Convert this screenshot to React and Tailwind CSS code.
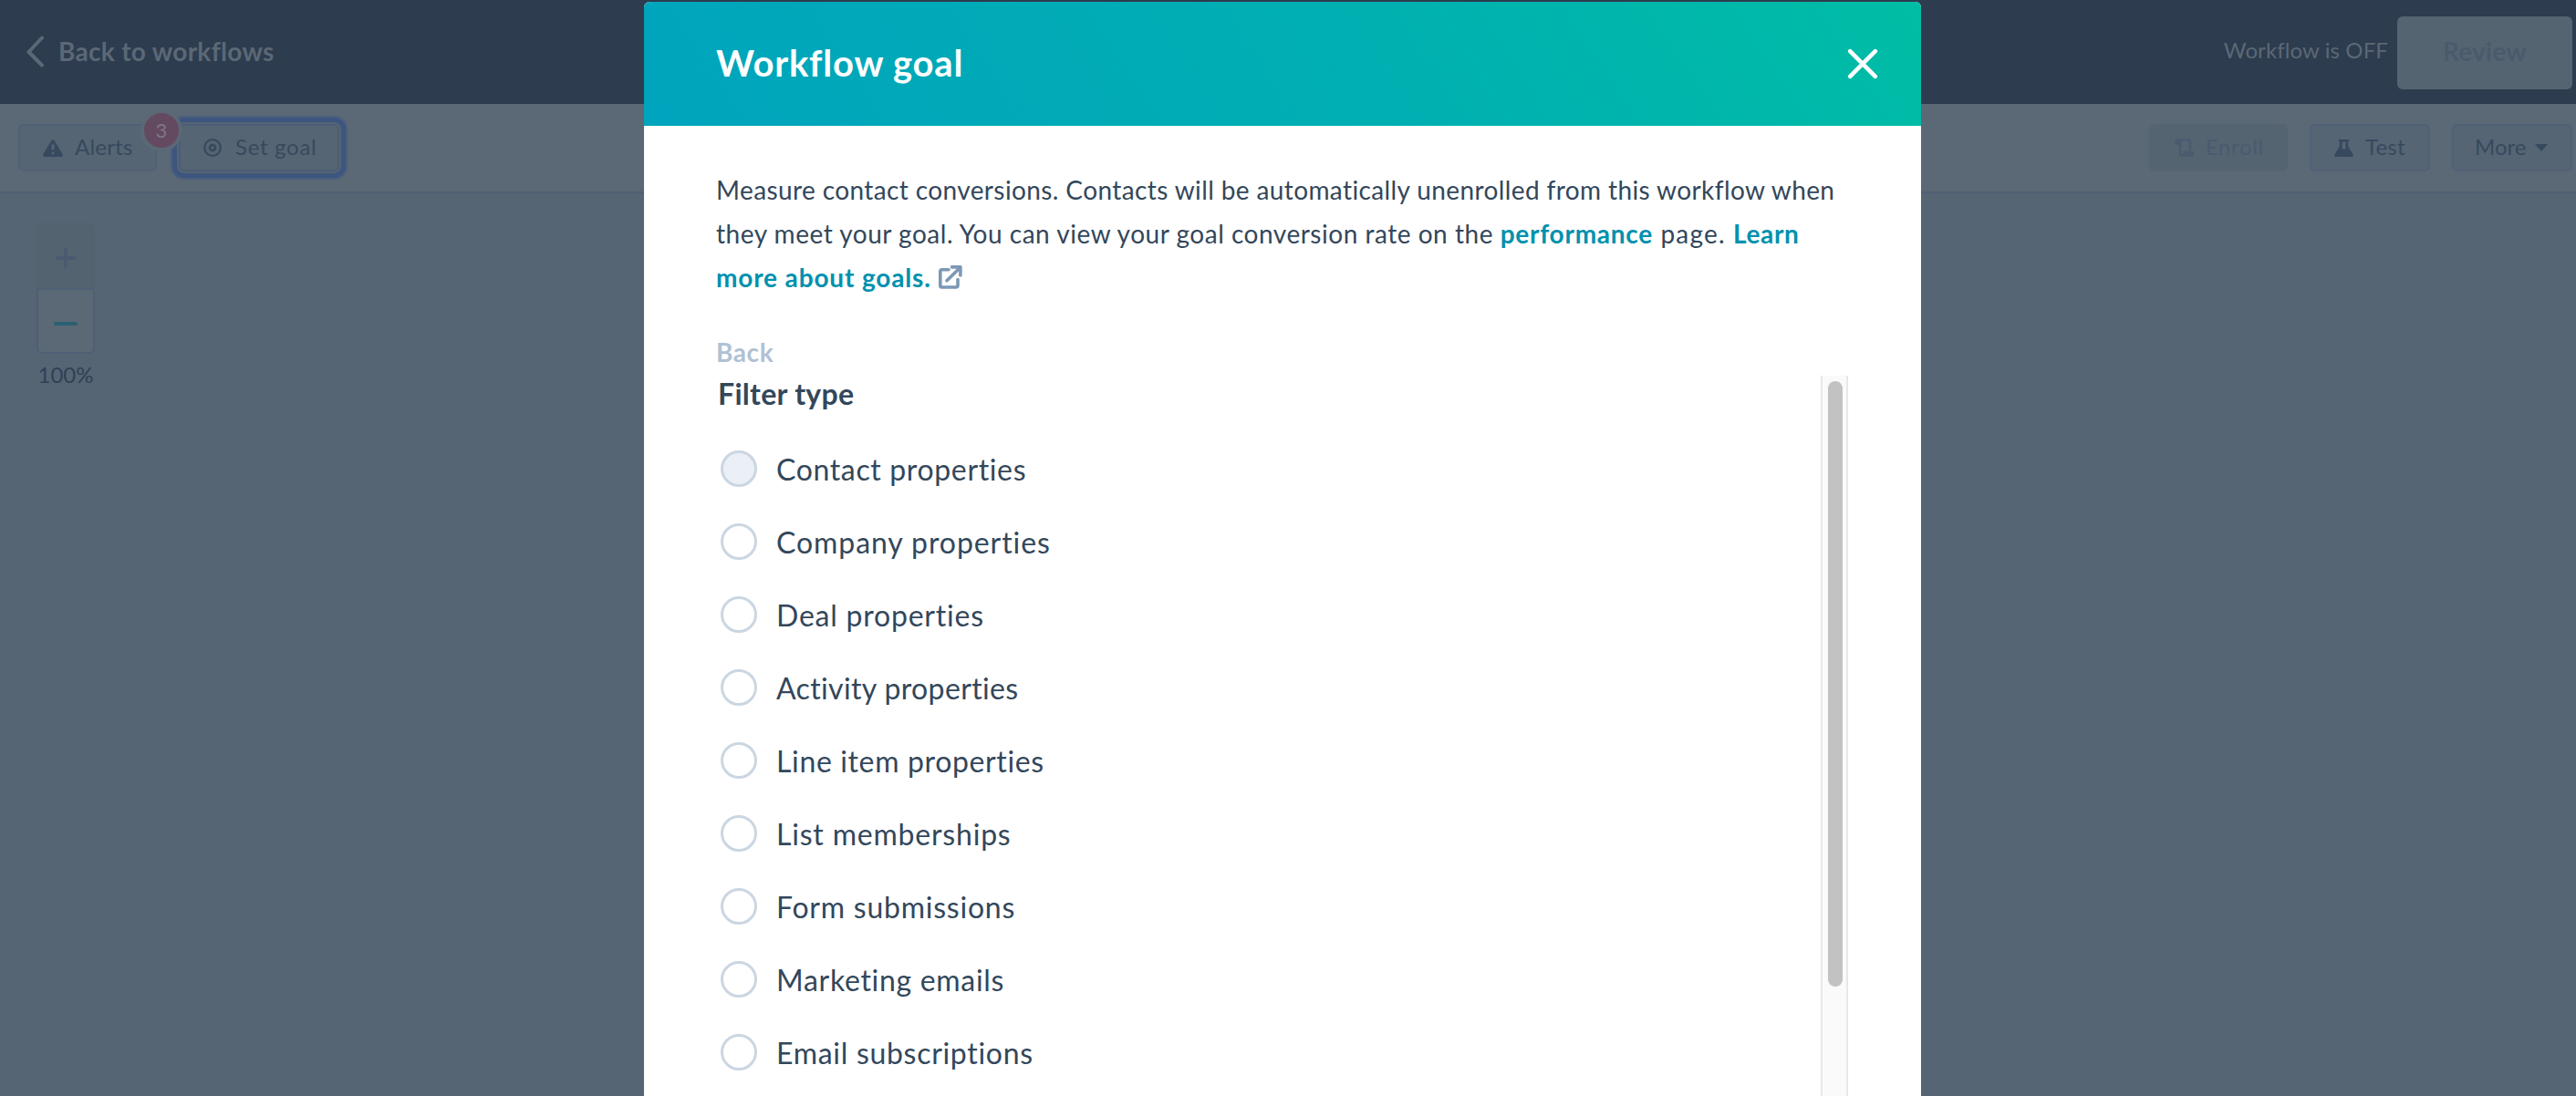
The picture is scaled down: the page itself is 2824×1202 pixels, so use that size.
import React, { useState } from "react";

const filterTypes = [
  { label: "Contact properties", tracking: "tracking-[0.64px]" },
  { label: "Company properties", tracking: "tracking-[0.92px]" },
  { label: "Deal properties", tracking: "tracking-[0.78px]" },
  { label: "Activity properties", tracking: "tracking-[0.36px]" },
  { label: "Line item properties", tracking: "tracking-[0.64px]" },
  { label: "List memberships", tracking: "tracking-[0.8px]" },
  { label: "Form submissions", tracking: "tracking-[0.76px]" },
  { label: "Marketing emails", tracking: "tracking-[0.7px]" },
  { label: "Email subscriptions", tracking: "tracking-[0.7px]" },
];

const ChevronLeftIcon = () => (
  <svg width="20" height="36" viewBox="0 0 20 36" fill="none" stroke="#5b6876" strokeWidth="4" strokeLinecap="round" strokeLinejoin="round">
    <path d="M17 2.5 2.5 18 17 32.5" />
  </svg>
);

const WarningIcon = () => (
  <svg width="22" height="19" viewBox="0 0 22 19">
    <path
      fill="#36495f"
      d="M9.3 1.2a2 2 0 0 1 3.4 0l8.9 14.9a1.9 1.9 0 0 1-1.7 2.9H2.1a1.9 1.9 0 0 1-1.7-2.9z"
    />
    <path d="M11 5.5v6M11 13.8v2.4" stroke="#566573" strokeWidth="2.8" />
  </svg>
);

const TargetIcon = () => (
  <svg width="20" height="20" viewBox="0 0 20 20" fill="none" stroke="#36495f">
    <circle cx="10" cy="10" r="8.8" strokeWidth="2.2" />
    <circle cx="10" cy="10" r="3.1" strokeWidth="2.6" />
  </svg>
);

const ScrollIcon = () => (
  <svg width="21" height="20" viewBox="0 0 21 20" fill="none" stroke="#4a5b70" strokeWidth="2.6">
    <path d="M1.3 5.7V3.6a2.2 2.2 0 0 1 2.2-2.3h11.3a2.2 2.2 0 0 1 2.2 2.2v10" strokeLinejoin="round" />
    <path d="M6 2v14.2a2.2 2.2 0 0 0 2.2 2.2h2" />
    <path d="M1 3h5v4H2a1 1 0 0 1-1-1zM9.5 13.8H21v2.6a3.4 3.4 0 0 1-3.4 3.4H9.5z" fill="#4a5b70" stroke="none" />
  </svg>
);

const FlaskIcon = () => (
  <svg width="21" height="19" viewBox="0 0 21 19">
    <path
      fill="#36495f"
      fillRule="evenodd"
      d="M5.6 0h9.8a.9.9 0 0 1 .9.9v1.4h-1.2v5.2l5.5 9a1.6 1.6 0 0 1-1.4 2.5H1.8a1.6 1.6 0 0 1-1.4-2.5l5.5-9V2.3H4.7V.9a.9.9 0 0 1 .9-.9zM8.6 2.5v8h3.8v-8z"
    />
  </svg>
);

const ExternalLinkIcon = () => (
  <svg width="26" height="26" viewBox="0 0 26 26" fill="none" stroke="#7c98b6" strokeWidth="3.6">
    <path d="M11 4.8H3.6a1.8 1.8 0 0 0-1.8 1.8v15.6A1.8 1.8 0 0 0 3.6 24h15.6a1.8 1.8 0 0 0 1.8-1.8V15.5" strokeLinecap="round" />
    <path d="M9 16.8 22 4" strokeLinecap="round" />
    <path d="M14.5 1.9h9.4v9" strokeLinecap="round" strokeLinejoin="round" />
  </svg>
);

const CloseIcon = () => (
  <svg width="34" height="34" viewBox="0 0 34 34" stroke="#ffffff" strokeWidth="4.6" strokeLinecap="round">
    <path d="M3.2 3.2l27.6 27.6M30.8 3.2 3.2 30.8" />
  </svg>
);

const TopBar = () => (
  <header className="flex h-[114px] items-center justify-between bg-[#2d3c4e] pr-1 pl-[29px]">
    <button className="flex items-center gap-[15px]">
      <ChevronLeftIcon />
      <span className="pb-[3px] text-[28px] font-bold tracking-[0.3px] text-[#5b6876]">
        Back to workflows
      </span>
    </button>
    <div className="flex items-center gap-[10px]">
      <span className="pb-[4px] text-[24px] tracking-[0.1px] text-[#5b6876]">Workflow is OFF</span>
      <button className="mt-[2px] h-20 w-48 rounded-md bg-[#556471] pb-[5px] text-[28px] font-bold tracking-[0.2px] text-[#4a5a6d]">
        Review
      </button>
    </div>
  </header>
);

const Toolbar = () => (
  <div className="flex h-[98px] items-center justify-between border-b-2 border-[#4f5f75] bg-[#5b6875] pr-1 pl-5 text-[24px] text-[#36495f]">
    <div className="flex items-center gap-6">
      <button className="relative flex h-[52px] w-[152px] items-center rounded-md border-2 border-[#506177] bg-[#566573] pl-[25px]">
        <WarningIcon />
        <span className="pb-[3px] pl-[13px] tracking-[0.2px]">Alerts</span>
        <span className="absolute -top-[18px] -right-[30px] z-10 flex size-[46px] items-center justify-center rounded-full border-4 border-[#5b6875] bg-[#644a60] pb-[2px] text-[22px] text-[#7e7789]">
          3
        </span>
      </button>
      <button className="flex h-[52px] w-[176px] items-center rounded-md border-2 border-[#4b5e77] bg-[#566573] pl-[25px] shadow-[0_0_0_2px_#566573,0_0_0_7px_#3d567f,0_0_0_9px_#4a5f7d]">
        <TargetIcon />
        <span className="pb-[3px] pl-[15px] tracking-[0.7px]">Set goal</span>
      </button>
    </div>
    <div className="flex items-center gap-6">
      <button className="flex h-[52px] w-[152px] items-center rounded-md bg-[#556471] pl-[28px] text-[#4a5b70]">
        <ScrollIcon />
        <span className="pb-[3px] pl-[13px] tracking-[0.6px]">Enroll</span>
      </button>
      <button className="flex h-[52px] w-[132px] items-center rounded-md border-2 border-[#506177] bg-[#566573] pl-[25px]">
        <FlaskIcon />
        <span className="pb-[3px] pl-[13px] tracking-[0.2px]">Test</span>
      </button>
      <button className="flex h-[52px] w-[132px] items-center rounded-md border-2 border-[#506177] bg-[#566573] pl-[23px]">
        <span className="pb-[3px]">More</span>
        <svg className="ml-[10px]" width="14" height="8" viewBox="0 0 14 8">
          <path d="M0 0h14L7 8z" fill="#36495f" />
        </svg>
      </button>
    </div>
  </div>
);

const ZoomControls = () => (
  <div className="flex w-[80px] flex-col items-center pt-8">
    <div className="flex h-[72px] w-16 items-center justify-center rounded-t-md bg-[#546370] pt-[6px]">
      <svg width="24" height="24" viewBox="0 0 24 24" stroke="#4a5b70" strokeWidth="4" strokeLinecap="round">
        <path d="M12 2.5v19M2.5 12h19" />
      </svg>
    </div>
    <div className="flex h-[72px] w-16 items-center justify-center rounded-b-md border-2 border-[#4f5f75] bg-[#5b6875] pt-[6px]">
      <svg width="26" height="4" viewBox="0 0 26 4" stroke="#2a6072" strokeWidth="4" strokeLinecap="round">
        <path d="M2 2h22" />
      </svg>
    </div>
    <span className="pt-[5px] text-[24px] text-[#2f4055]">100%</span>
  </div>
);

const FilterOption = ({ label, tracking, highlighted, onSelect }) => (
  <button onClick={onSelect} className="flex h-20 items-center gap-[21px] pl-1">
    <span
      className={`size-10 rounded-full border-3 border-[#cbd6e2] ${
        highlighted ? "bg-[#eaf0f6]" : "bg-white"
      }`}
    />
    <span className={`pt-[2px] text-[32px] ${tracking}`}>{label}</span>
  </button>
);

const GoalModal = () => {
  const [selected, setSelected] = useState(0);

  return (
    <div className="absolute top-[2px] left-[706px] flex h-[1200px] w-[1400px] flex-col overflow-hidden rounded-t-md bg-white text-[#33475b]">
      {/* Modal header */}
      <div className="flex h-[136px] shrink-0 items-center justify-between bg-[linear-gradient(57deg,#00a4bd,#00afb2_56%,#00bda5)] pr-[47px] pl-[79px]">
        <h2 className="pb-[2px] text-[40px] font-bold tracking-[0.8px] text-white">Workflow goal</h2>
        <button>
          <CloseIcon />
        </button>
      </div>

      {/* Modal body */}
      <div className="flex min-h-0 flex-1 flex-col px-20 pt-[46px]">
        <p className="-ml-px text-[28px] leading-[48px] whitespace-nowrap">
          <span className="block tracking-[0.39px]">
            Measure contact conversions. Contacts will be automatically unenrolled from this workflow when
          </span>
          <span className="block tracking-[0.52px]">
            they meet your goal. You can view your goal conversion rate on the{" "}
            <a className="font-bold tracking-[0.75px] text-[#0091ae]">performance</a>
            <span className="tracking-[1.2px]"> page. </span>
            <a className="font-bold tracking-[0.6px] text-[#0091ae]">Learn</a>
          </span>
          <span className="flex items-center gap-2">
            <a className="font-bold tracking-[0.85px] text-[#0091ae]">more about goals.</a>
            <ExternalLinkIcon />
          </span>
        </p>

        <button className="mt-[34px] -ml-px self-start text-[28px] leading-[48px] font-bold tracking-[0.6px] text-[#b0c1d4]">
          Back
        </button>

        <div className="mt-[2px] flex min-h-0 flex-1 justify-between">
          <div className="flex flex-col">
            <h3 className="mb-[23px] pl-px text-[32px] leading-[39px] font-bold tracking-[0.3px]">Filter type</h3>
            {filterTypes.map((item, index) => (
              <FilterOption
                key={item.label}
                label={item.label}
                tracking={item.tracking}
                highlighted={selected === index}
                onSelect={() => setSelected(index)}
              />
            ))}
          </div>
          {/* Scrollbar */}
          <div className="w-[30px] border-x-2 border-[#e8e8e8] bg-[#fafafa] pt-[6px] pl-[6px]">
            <div className="h-[664px] w-4 rounded-full bg-[#c2c2c2]" />
          </div>
        </div>
      </div>
    </div>
  );
};

export default function App() {
  return (
    <div className="relative h-[1202px] w-[2824px] overflow-hidden bg-[#566573] font-['Lato','Open_Sans',sans-serif]">
      <TopBar />
      <Toolbar />
      <div className="pl-8">
        <ZoomControls />
      </div>
      <GoalModal />
    </div>
  );
}
